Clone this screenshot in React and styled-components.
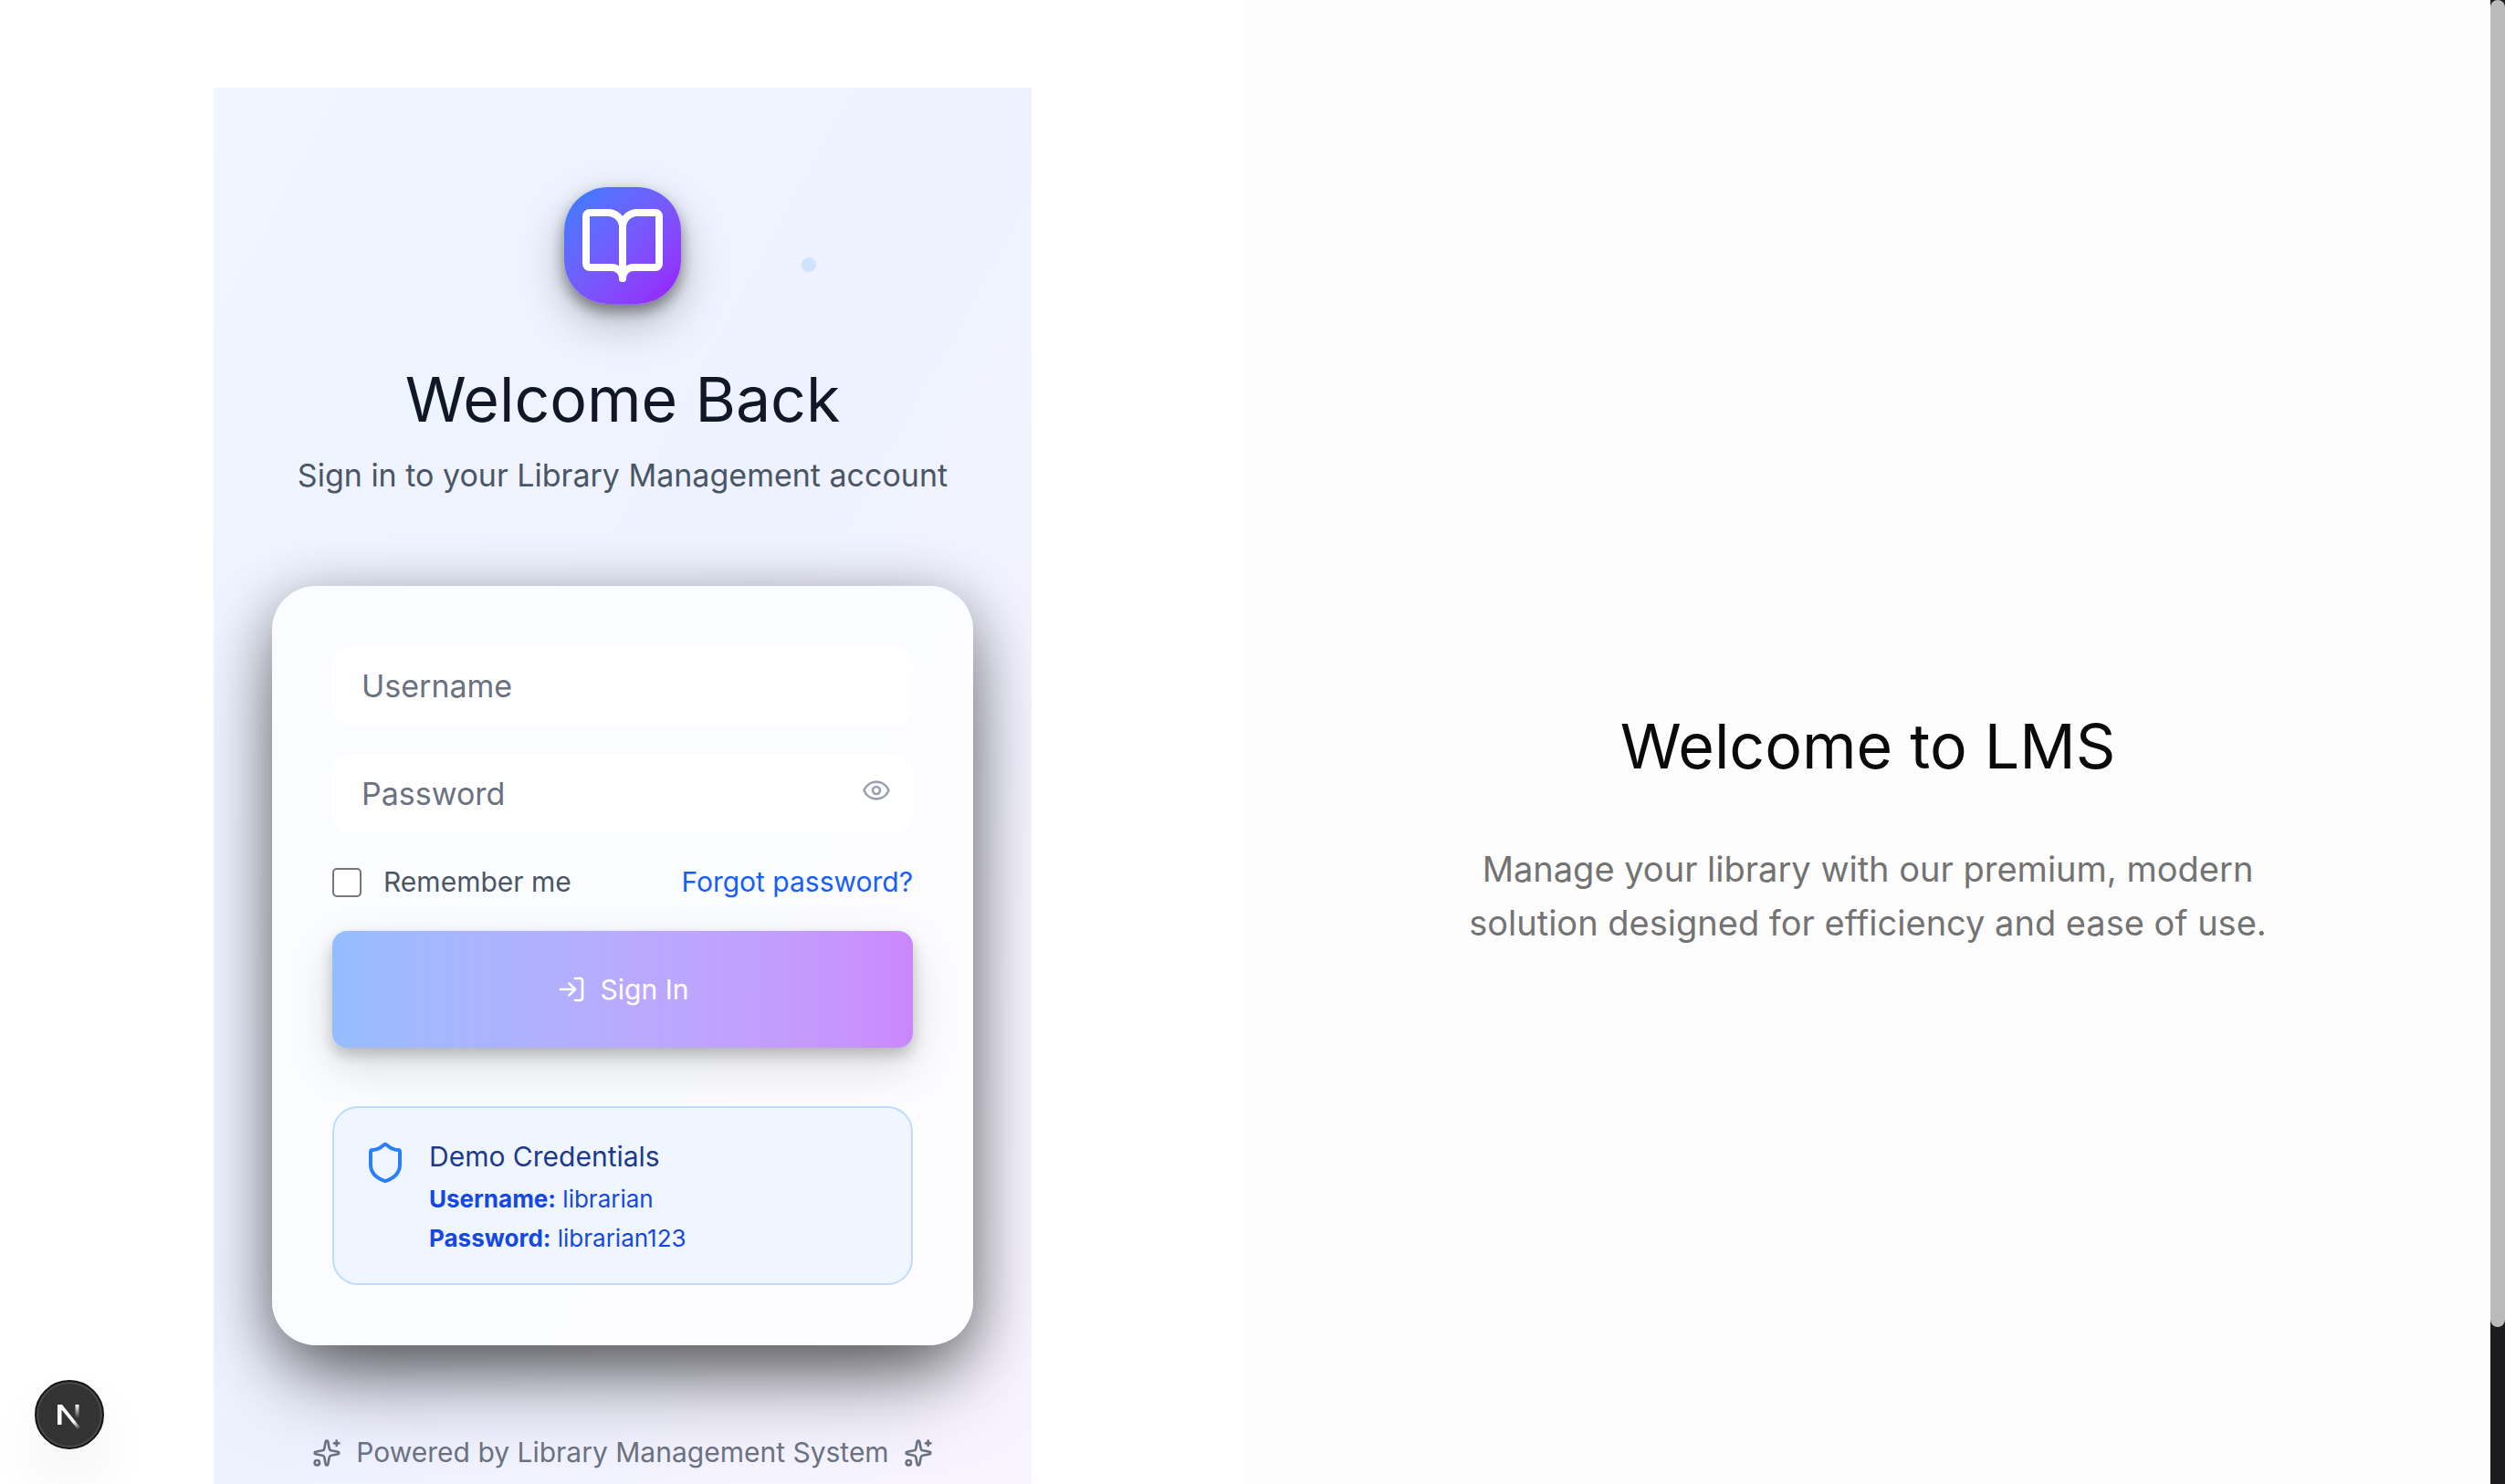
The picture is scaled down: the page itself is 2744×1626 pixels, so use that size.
import React from "react";
import styled, { createGlobalStyle } from "styled-components";
import { BookOpen, Eye, LogIn, Shield, Sparkles } from "lucide-react";

const GlobalStyle = createGlobalStyle`
  *, *::before, *::after { box-sizing: border-box; }
  body {
    margin: 0;
    background: #ffffff;
    color: #0a0a0a;
    font-family: Inter, "Noto Sans", "Liberation Sans", sans-serif;
    font-size: 32px;
    line-height: 48px;
  }
  h1, h2, p { margin: 0; font-weight: 400; }
`;

const Viewport = styled.div`
  display: grid;
  grid-template-columns: 1fr 16px;
  height: 100vh;
`;

const ScrollArea = styled.div`
  min-width: 0;
  overflow: hidden;
`;

const Page = styled.div`
  display: grid;
  grid-template-columns: 1fr 1fr;
`;

const FormSide = styled.main`
  display: flex;
  justify-content: center;
  padding: 96px;
`;

const Panel = styled.section`
  position: relative;
  flex: 0 1 896px;
  display: flex;
  flex-direction: column;
  justify-content: center;
  min-height: 100vh;
  padding: 64px;
  overflow: hidden;
  background: linear-gradient(to bottom right in oklab, #eff6ff, #eef2ff, #faf5ff);
`;

const Bubble = styled.span`
  position: absolute;
  top: 186px;
  right: 236px;
  width: 16px;
  height: 16px;
  border-radius: 50%;
  background: #cfe3ff;
`;

const Header = styled.header`
  display: flex;
  flex-direction: column;
  align-items: center;
  text-align: center;
`;

const Logo = styled.div`
  display: grid;
  place-items: center;
  width: 128px;
  height: 128px;
  margin-bottom: 64px;
  border-radius: 48px;
  color: #ffffff;
  background: linear-gradient(to bottom right in oklab, #2b7fff, #9810fa);
  box-shadow: 0 20px 50px rgba(0, 0, 0, 0.25), 0 8px 16px rgba(0, 0, 0, 0.4);
`;

const Title = styled.h1`
  font-size: 68px;
  line-height: 80px;
  color: #101828;
`;

const Subtitle = styled.p`
  margin-top: 16px;
  font-size: 34px;
  line-height: 56px;
  color: #4a5565;
`;

const Card = styled.form`
  display: flex;
  flex-direction: column;
  gap: 31px;
  margin-top: 93px;
  padding: 66px;
  border-radius: 48px;
  background: rgba(255, 255, 255, 0.72);
  box-shadow: 0 50px 100px -24px rgba(0, 0, 0, 0.5), 0 16px 64px rgba(0, 0, 0, 0.4);
`;

const Field = styled.div`
  position: relative;
  display: flex;
`;

const TextInput = styled.input`
  flex: 1;
  min-width: 0;
  height: 87px;
  padding: 0 32px;
  border: 0;
  border-radius: 20px;
  background: #ffffff;
  font: inherit;
  font-size: 34px;
  color: #101828;
  &::placeholder { color: #6a7282; opacity: 1; }
`;

const EyeButton = styled.button`
  position: absolute;
  top: 24px;
  right: 24px;
  display: grid;
  padding: 0;
  border: 0;
  background: none;
  color: #99a1af;
`;

const OptionRow = styled.div`
  display: flex;
  align-items: center;
  justify-content: space-between;
  font-size: 30px;
  line-height: 45px;
`;

const Remember = styled.label`
  display: flex;
  align-items: center;
  gap: 24px;
  color: #4a5565;
`;

const Checkbox = styled.input`
  appearance: none;
  width: 32px;
  height: 32px;
  margin: 0;
  border: 2px solid #767676;
  border-radius: 5px;
  background: #ffffff;
`;

const ForgotLink = styled.a`
  color: #155dfc;
  text-decoration: none;
`;

const SubmitButton = styled.button`
  display: flex;
  align-items: center;
  justify-content: center;
  gap: 16px;
  height: 128px;
  border: 0;
  border-radius: 16px;
  font: inherit;
  font-size: 30px;
  color: #ffffff;
  background: linear-gradient(to right in oklab, rgba(43, 127, 255, 0.5), rgba(152, 16, 250, 0.5));
  box-shadow: 0 20px 50px rgba(0, 0, 0, 0.13), 0 8px 16px rgba(0, 0, 0, 0.2);
`;

const Credentials = styled.aside`
  display: flex;
  gap: 24px;
  margin-top: 33px;
  padding: 28px 32px;
  border: 2px solid #bedbff;
  border-radius: 28px;
  background: #eff6ff;
`;

const ShieldIcon = styled(Shield)`
  flex: none;
  margin-top: 8px;
  color: #2b7fff;
`;

const CredentialsTitle = styled.p`
  font-size: 30px;
  line-height: 50px;
  color: #1c398e;
`;

const CredentialsLine = styled.p`
  font-size: 26px;
  line-height: 43px;
  color: #1447e6;
`;

const Footer = styled.footer`
  display: flex;
  align-items: center;
  justify-content: center;
  gap: 16px;
  margin-top: 96px;
  font-size: 30px;
  line-height: 43px;
  color: #6a7282;
`;

const IntroSide = styled.section`
  display: flex;
  flex-direction: column;
  align-items: center;
  justify-content: center;
  padding: 96px;
  text-align: center;
  background: #fdfdfd;
`;

const IntroTitle = styled.h2`
  font-size: 68px;
  line-height: 80px;
`;

const IntroText = styled.p`
  max-width: 896px;
  margin-top: 66px;
  font-size: 38px;
  line-height: 59px;
  color: #737373;
`;

const ScrollTrack = styled.div`
  background: #1c1c1e;
`;

const ScrollThumb = styled.div`
  height: 1454px;
  border-radius: 8px;
  background: #bababa;
`;

const DevBadge = styled.button`
  position: fixed;
  left: 38px;
  bottom: 38px;
  display: grid;
  place-items: center;
  width: 76px;
  height: 76px;
  padding: 0;
  border: 2px solid #141414;
  border-radius: 50%;
  background: #333333;
  box-shadow: inset 0 0 0 2px #4a4a4a, 0 32px 64px rgba(0, 0, 0, 0.06);
`;

function NextMark() {
  return (
    <svg width="28" height="34" viewBox="0 0 28 34" fill="none" aria-hidden="true">
      <defs>
        <linearGradient id="diag" x1="12" y1="17" x2="25" y2="33" gradientUnits="userSpaceOnUse">
          <stop stopColor="#fff" />
          <stop offset="0.5" stopColor="#fff" />
          <stop offset="1" stopColor="#fff" stopOpacity="0" />
        </linearGradient>
        <linearGradient id="stem" x1="22" y1="6" x2="22" y2="21" gradientUnits="userSpaceOnUse">
          <stop stopColor="#fff" />
          <stop offset="1" stopColor="#fff" stopOpacity="0" />
        </linearGradient>
      </defs>
      <path d="M1 28V6h5L26 31l-3 2L5.500 11.500V28Z" fill="url(#diag)" />
      <path d="M20.500 6h4v16h-4Z" fill="url(#stem)" />
    </svg>
  );
}

export default function App() {
  return (
    <>
      <GlobalStyle />
      <Viewport>
        <ScrollArea>
          <Page>
            <FormSide>
              <Panel>
                <Bubble />
                <Header>
                  <Logo><BookOpen size={96} /></Logo>
                  <Title>Welcome Back</Title>
                  <Subtitle>Sign in to your Library Management account</Subtitle>
                </Header>
                <Card onSubmit={(e) => e.preventDefault()}>
                  <Field>
                    <TextInput aria-label="Username" placeholder="Username" />
                  </Field>
                  <Field>
                    <TextInput aria-label="Password" type="password" placeholder="Password" />
                    <EyeButton type="button" aria-label="Show password"><Eye size={32} /></EyeButton>
                  </Field>
                  <OptionRow>
                    <Remember><Checkbox type="checkbox" />Remember me</Remember>
                    <ForgotLink href="#forgot">Forgot password?</ForgotLink>
                  </OptionRow>
                  <SubmitButton type="submit"><LogIn size={32} />Sign In</SubmitButton>
                  <Credentials>
                    <ShieldIcon size={48} />
                    <div>
                      <CredentialsTitle>Demo Credentials</CredentialsTitle>
                      <CredentialsLine><strong>Username:</strong> librarian</CredentialsLine>
                      <CredentialsLine><strong>Password:</strong> librarian123</CredentialsLine>
                    </div>
                  </Credentials>
                </Card>
                <Footer>
                  <Sparkles size={32} />
                  <span>Powered by Library Management System</span>
                  <Sparkles size={32} />
                </Footer>
              </Panel>
            </FormSide>
            <IntroSide>
              <IntroTitle>Welcome to LMS</IntroTitle>
              <IntroText>Manage your library with our premium, modern solution designed for efficiency and ease of use.</IntroText>
            </IntroSide>
          </Page>
        </ScrollArea>
        <ScrollTrack><ScrollThumb /></ScrollTrack>
      </Viewport>
      <DevBadge type="button" aria-label="Open developer tools"><NextMark /></DevBadge>
    </>
  );
}
